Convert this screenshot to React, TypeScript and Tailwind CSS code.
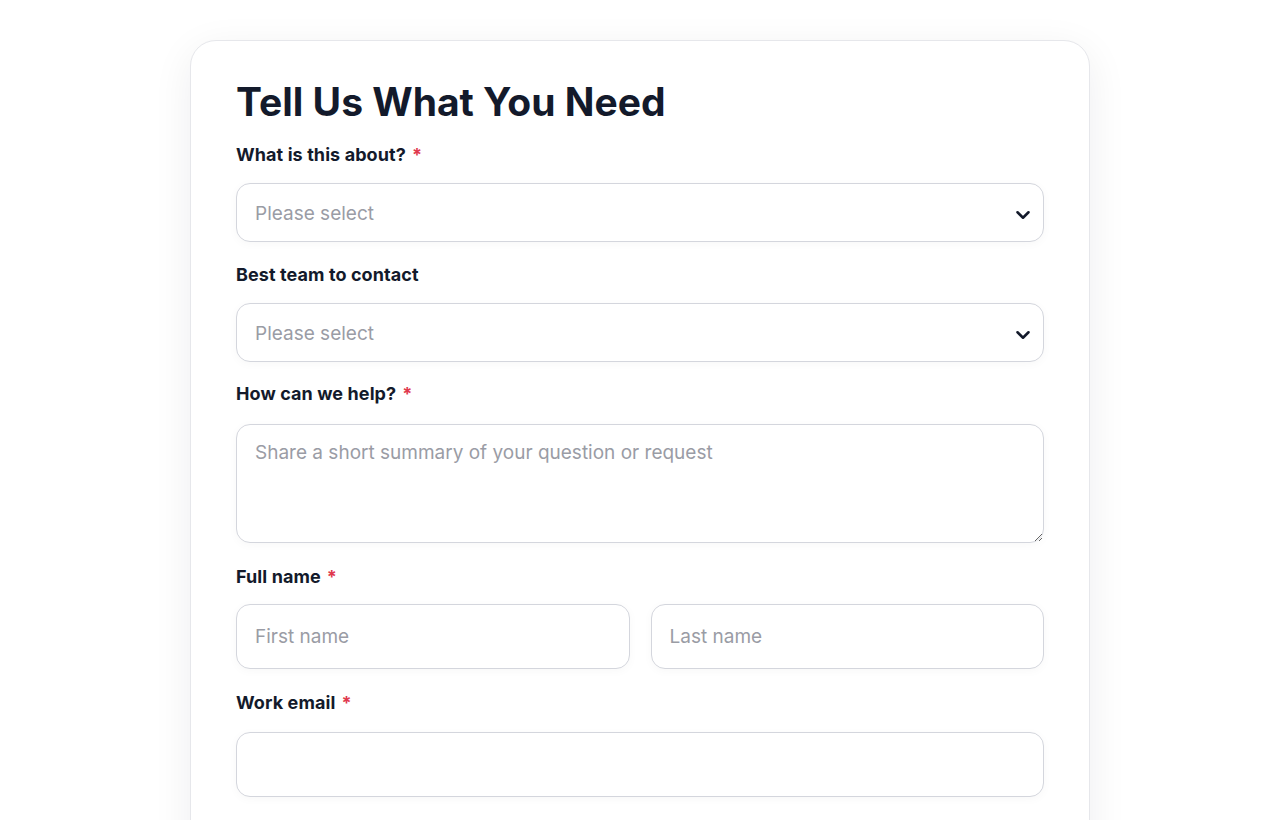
import { ChevronDown } from "lucide-react";

const inputBase =
  "w-full rounded-[14px] border border-[#d4d6dd] bg-white px-[18px] text-[19px] placeholder:text-[#9a9ca5] shadow-[0_2px_10px_rgba(17,24,39,0.03)] outline-none";

const Label = ({ text, required }: { text: string; required?: boolean }) => {
  return (
    <label className="block text-[18px] font-bold leading-7 tracking-[0.005em] text-[#131a2b]">
      {text}
      {required && <span className="ml-[6px] text-[#e0384d]">*</span>}
    </label>
  );
};

const SelectBox = () => {
  return (
    <div className="relative">
      <select
        defaultValue=""
        className={`${inputBase} h-[59px] appearance-none pt-[4px] text-[#9a9ca5]`}
      >
        <option value="" disabled>
          Please select
        </option>
        <option>Sales</option>
        <option>Support</option>
      </select>
      <ChevronDown
        className="pointer-events-none absolute right-[10px] top-1/2 h-[22px] w-[22px] -translate-y-[9px] text-[#131a2b]"
        strokeWidth={2.75}
      />
    </div>
  );
};

export default function App() {
  return (
    <div
      className="min-h-screen bg-white pt-[40px]"
      style={{ fontFamily: "Inter, 'Noto Sans', sans-serif" }}
    >
      <div className="mx-auto w-[900px] rounded-[26px] border border-[#e6e7eb] bg-white px-[45px] pt-[36px] pb-12 shadow-[0_10px_40px_rgba(17,24,39,0.07)]">
        <h1 className="text-[39px] font-bold leading-[50px] text-[#131a2b]">
          Tell Us What You Need
        </h1>

        <div className="mt-[14px]">
          <Label text="What is this about?" required />
          <div className="mt-[14px]">
            <SelectBox />
          </div>
        </div>

        <div className="mt-[19px]">
          <Label text="Best team to contact" />
          <div className="mt-[14px]">
            <SelectBox />
          </div>
        </div>

        <div className="mt-[18px]">
          <Label text="How can we help?" required />
          <textarea
            className={`${inputBase} mt-[16px] block h-[119px] py-[14px] leading-7 text-[#111827]`}
            placeholder="Share a short summary of your question or request"
          />
        </div>

        <div className="mt-[20px]">
          <Label text="Full name" required />
          <div className="mt-[13px] grid grid-cols-2 gap-[21px]">
            <input className={`${inputBase} h-[65px] text-[#111827]`} placeholder="First name" />
            <input className={`${inputBase} h-[65px] text-[#111827]`} placeholder="Last name" />
          </div>
        </div>

        <div className="mt-[20px]">
          <Label text="Work email" required />
          <input type="email" className={`${inputBase} mt-[15px] h-[65px] text-[#111827]`} />
        </div>

        <div className="h-[60px]" />
      </div>
    </div>
  );
}
